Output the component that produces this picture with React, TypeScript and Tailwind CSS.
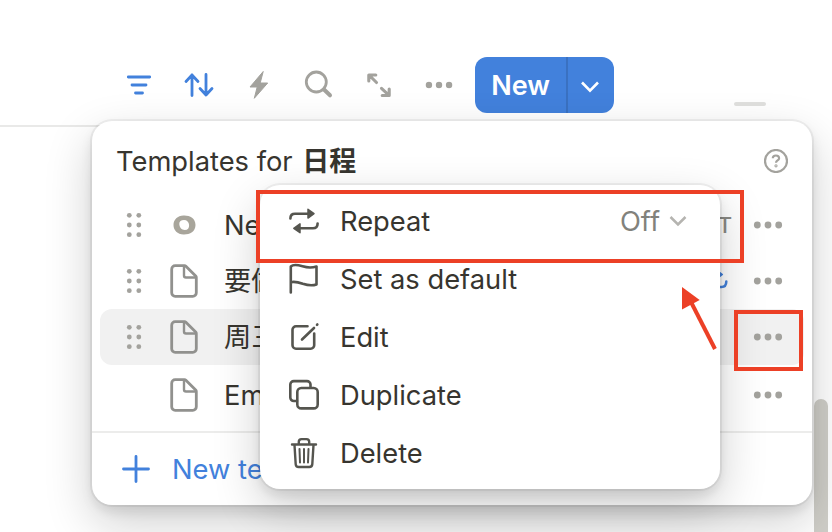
import React from "react";

const panelShadow =
  "shadow-[0_0_0_2px_rgba(15,15,15,0.05),0_6px_12px_rgba(15,15,15,0.1),0_18px_48px_rgba(15,15,15,0.2)]";

function Dots({ className = "" }: { className?: string }) {
  return (
    <svg width="30" height="8" viewBox="0 0 30 8" className={`shrink-0 ${className}`} fill="#a3a29d">
      <circle cx="4.3" cy="4" r="3.4" />
      <circle cx="15" cy="4" r="3.4" />
      <circle cx="25.7" cy="4" r="3.4" />
    </svg>
  );
}

function Grip() {
  return (
    <svg width="16" height="26" viewBox="0 0 16 26" fill="#a3a29d">
      {[3.3, 13, 22.7].map((y) => (
        <g key={y}>
          <circle cx="3.3" cy={y} r="2.4" />
          <circle cx="12.8" cy={y} r="2.4" />
        </g>
      ))}
    </svg>
  );
}

function PageIcon() {
  return (
    <svg width="28" height="34" viewBox="0 0 28 34" fill="none" stroke="#91918e" strokeWidth="2.8" strokeLinejoin="round">
      <path d="M5.200 1.700H14.500a2 2 0 0 1 1.400.6L25.700 12a2 2 0 0 1 .6 1.400V28.800a3.500 3.500 0 0 1-3.500 3.500H5.200a3.500 3.500 0 0 1-3.500-3.500V5.200a3.500 3.500 0 0 1 3.500-3.500Z" />
      <path d="M14 2v9.500a2 2 0 0 0 2 2h10" strokeWidth="2.400" />
    </svg>
  );
}

function BlobIcon() {
  return (
    <svg width="24" height="20" viewBox="0 0 24 20" fill="#a8a59b" fillRule="evenodd">
      <path d="M11.500 .5C17.500 .2 23.500 3 23.500 10s-6 9.600-12 9.400C5.500 19.300 1.500 15.500 1.500 10S5.500 .8 11.500 .5ZM12 5C9 5 7.200 6.500 7.300 9c.1 3 2.200 6 5.500 6 3 0 4.500-2 4.300-5C16.900 7 15 5 12 5Z" />
    </svg>
  );
}

function TemplateRow({
  icon,
  name,
  grip = true,
  active = false,
  extra,
}: {
  icon: React.ReactNode;
  name: string;
  grip?: boolean;
  active?: boolean;
  extra?: React.ReactNode;
}) {
  return (
    <div className={`flex h-14 items-center rounded-xl pr-[21px] pl-[26px] ${active ? "bg-[#f1f1f1]" : ""}`}>
      <div className="w-4">{grip && <Grip />}</div>
      <div className="ml-[26px] flex w-8 justify-center">{icon}</div>
      <span className="ml-6 grow pt-0.5">{name}</span>
      {extra}
      <Dots />
    </div>
  );
}

function MenuItem({ icon, label, children }: { icon: React.ReactNode; label: string; children?: React.ReactNode }) {
  return (
    <div className="flex h-[58px] items-center pr-8 pl-7">
      <svg width="32" height="32" viewBox="0 0 32 32" fill="none" stroke="#55554f" strokeWidth="2.600" strokeLinejoin="round" strokeLinecap="round">
        {icon}
      </svg>
      <span className="ml-5 grow pt-0.5">{label}</span>
      {children}
    </div>
  );
}

function Toolbar() {
  return (
    <div className="flex h-[56px] items-center pl-[123px]">
      <svg width="32" height="32" viewBox="0 0 32 32" stroke="#4281dc" strokeWidth="2.800" strokeLinecap="round">
        <path d="M5.300 8h21.400M9 16h14M12.500 24h7" />
      </svg>
      <svg width="32" height="32" viewBox="0 0 32 32" className="ml-7" fill="none" stroke="#4281dc" strokeWidth="2.800" strokeLinecap="round" strokeLinejoin="round">
        <path d="M9 26.500V6M3 12.500l6-6.500 6 6.500M23 5.500V26M17 19.500l6 6.500 6-6.500" />
      </svg>
      <svg width="32" height="32" viewBox="0 0 32 32" className="ml-7" fill="#a3a29d" stroke="#a3a29d" strokeLinejoin="round">
        <path d="M20.200 2.500 7 18h7.200L11.300 29.300 24.700 14h-7.500Z" />
      </svg>
      <svg width="32" height="32" viewBox="0 0 32 32" className="ml-7" fill="none" stroke="#a3a29d" strokeLinecap="round">
        <circle cx="13.300" cy="13" r="10" strokeWidth="2.800" />
        <path d="m21 20.500 6 5.800" strokeWidth="4" />
      </svg>
      <svg width="32" height="32" viewBox="0 0 32 32" className="ml-7" fill="none" stroke="#a3a29d" strokeWidth="3.100" strokeLinecap="round" strokeLinejoin="round">
        <path d="M5.800 12V6h7M6.500 6.500l7 7M26.200 20v6.500h-7M25.500 25.800l-7-6.500" />
      </svg>
      <Dots className="ml-[29px] scale-[0.94]" />
      <div className="ml-[21px] flex h-14 w-[139px] items-center rounded-xl bg-[#4281dc] text-white">
        <span className="flex h-full w-[91px] items-center justify-center text-[27px] leading-none font-semibold">New</span>
        <span className="h-full w-0.5 bg-[#3a71c1]" />
        <svg width="20" height="20" viewBox="0 0 20 20" className="mt-1 ml-3" fill="none" stroke="white" strokeWidth="2.600">
          <path d="m2 5.500 8 8.200 8-8.200" />
        </svg>
      </div>
    </div>
  );
}

function ContextMenu() {
  return (
    <div className={`absolute top-[64px] left-[168px] h-[304px] w-[460px] rounded-[20px] bg-white py-[7px] ${panelShadow}`}>
      <MenuItem
        label="Repeat"
        icon={
          <>
            <path d="M2.400 13.500C2.400 9.900 4 8.700 7 8.700H20M29.600 18.500c0 3.600-1.600 4.800-4.600 4.800H12" />
            <path d="M20 4.300v8.800l6-4.400ZM12 18.900v8.800l-6.200-4.400Z" fill="#55554f" strokeWidth="1.500" />
          </>
        }
      >
        <span className="pt-0.5 text-[#82827c]">Off</span>
        <svg width="20" height="20" viewBox="0 0 20 20" className="ml-2" fill="none" stroke="#b5b4b0" strokeWidth="2.500">
          <path d="m2.500 6 7.500 7.500L17.500 6" />
        </svg>
      </MenuItem>
      <MenuItem
        label="Set as default"
        icon={<path d="M2.800 29.500V3.500C5 1.500 9 1.700 14.500 3.300c5.500 1.700 10 1.500 14 .2V21.500c-4 1.300-8.500 1-13.700-.7C9.500 18.900 6 18.500 2.800 19.200" />}
      />
      <MenuItem
        label="Edit"
        icon={
          <>
            <path d="M19.500 5.300H8a3.500 3.500 0 0 0-3.500 3.500v15.400a3.500 3.500 0 0 0 3.500 3.500h14.700a3.500 3.500 0 0 0 3.500-3.500V12.500" />
            <path d="M14 18.500 26 7M29 3.800l.3-.3" />
          </>
        }
      />
      <MenuItem
        label="Duplicate"
        icon={
          <>
            <rect x="9.300" y="9" width="20.400" height="20.400" rx="4" />
            <path d="M9 22H5.800a3.500 3.500 0 0 1-3.500-3.500V5.600A3.500 3.500 0 0 1 5.800 2.100H19a3.500 3.500 0 0 1 3.500 3.500V8.500" />
          </>
        }
      />
      <MenuItem
        label="Delete"
        icon={
          <>
            <path d="M4 7.500h24M6.500 8l1.200 19.200a3 3 0 0 0 3 2.800h10.600a3 3 0 0 0 3-2.800L25.500 8M10.800 7V4.800A2.700 2.700 0 0 1 13.500 2.100h5a2.700 2.700 0 0 1 2.700 2.700V7" strokeWidth="2.400" />
            <path d="M11.500 12l.5 13.500M16 12v13.500M20.500 12l-.5 13.500" strokeWidth="2" />
          </>
        }
      />
    </div>
  );
}

export default function App() {
  return (
    <div className="relative h-[532px] w-[832px] overflow-hidden bg-white pt-[57px] font-['Inter','Noto_Sans_CJK_SC',sans-serif] text-[27.3px] leading-[36px] text-[#37352f]">
      <Toolbar />
      <div className="mt-3 h-0.5 w-[120px] bg-[#e9e9e8]" />
      <div className="absolute top-[102px] left-[734px] h-[4px] w-8 rounded bg-[#e0e0de]" />
      <div className="absolute top-[399px] left-[814px] h-[160px] w-[14px] rounded-full bg-[#cfcec8]" />

      <div className={`absolute top-[121px] left-[92px] flex h-[384px] w-[720px] flex-col rounded-[20px] bg-white ${panelShadow}`}>
        <div className="flex h-[76px] items-center pt-1 pr-6 pl-6">
          <span className="grow pt-0.5">
            Templates for <b className="ml-0.5 text-[27px] font-bold">日程</b>
          </span>
          <svg width="24" height="24" viewBox="0 0 24 24" fill="none" stroke="#a3a29d" strokeWidth="2.200">
            <circle cx="12" cy="12" r="11" />
            <path d="M8.800 9.300c0-1.800 1.300-2.800 3.100-2.800s3.200 1 3.200 2.700c0 2.300-3.100 2.200-3.100 4.500" />
            <circle cx="12" cy="16.800" r=".5" />
          </svg>
        </div>
        <div className="flex flex-col px-2">
          <TemplateRow icon={<BlobIcon />} name="New" extra={<span className="mr-[21px] text-[22px] font-medium text-[#8a8984]">T</span>} />
          <TemplateRow
            icon={<PageIcon />}
            name="要做"
            extra={
              <svg width="24" height="24" viewBox="0 0 24 24" className="mr-6" fill="none" stroke="#4281dc" strokeWidth="2.500" strokeLinecap="round" strokeLinejoin="round">
                <path d="M1.500 9.500c0-3 1.200-4 4-4H13M21.300 12.500c0 3.800-1.300 5.500-4.800 5.500H9" />
                <path d="M13.500 2.500v6l4-3ZM9 15v6l-4-3Z" fill="#4281dc" strokeWidth="1.200" />
              </svg>
            }
          />
          <TemplateRow icon={<PageIcon />} name="周三" active />
          <div className="mt-0.5">
            <TemplateRow icon={<PageIcon />} name="Empty" grip={false} />
          </div>
        </div>
        <div className="mt-2 h-0.5 bg-[#ececeb]" />
        <div className="flex grow items-center pl-[30px] text-[#4281dc]">
          <svg width="28" height="28" viewBox="0 0 28 28" stroke="currentColor" strokeWidth="2.800" strokeLinecap="round">
            <path d="M14 1.500v25M1.500 14h25" />
          </svg>
          <span className="ml-[22px] pt-0.5">New template</span>
        </div>
        <ContextMenu />
      </div>

      <div className="absolute top-[190px] left-[256px] h-[73px] w-[488px] border-4 border-[#ec4026]" />
      <div className="absolute top-[310px] left-[734px] h-[61px] w-[69px] border-4 border-[#ec4026]" />
      <svg width="40" height="66" viewBox="0 0 40 66" className="absolute top-[286px] left-[680px]">
        <path d="M11 16 35 63" stroke="#ec4026" strokeWidth="4" />
        <path d="M2 1v22.500L19.700 14Z" fill="#ec4026" />
      </svg>
    </div>
  );
}
